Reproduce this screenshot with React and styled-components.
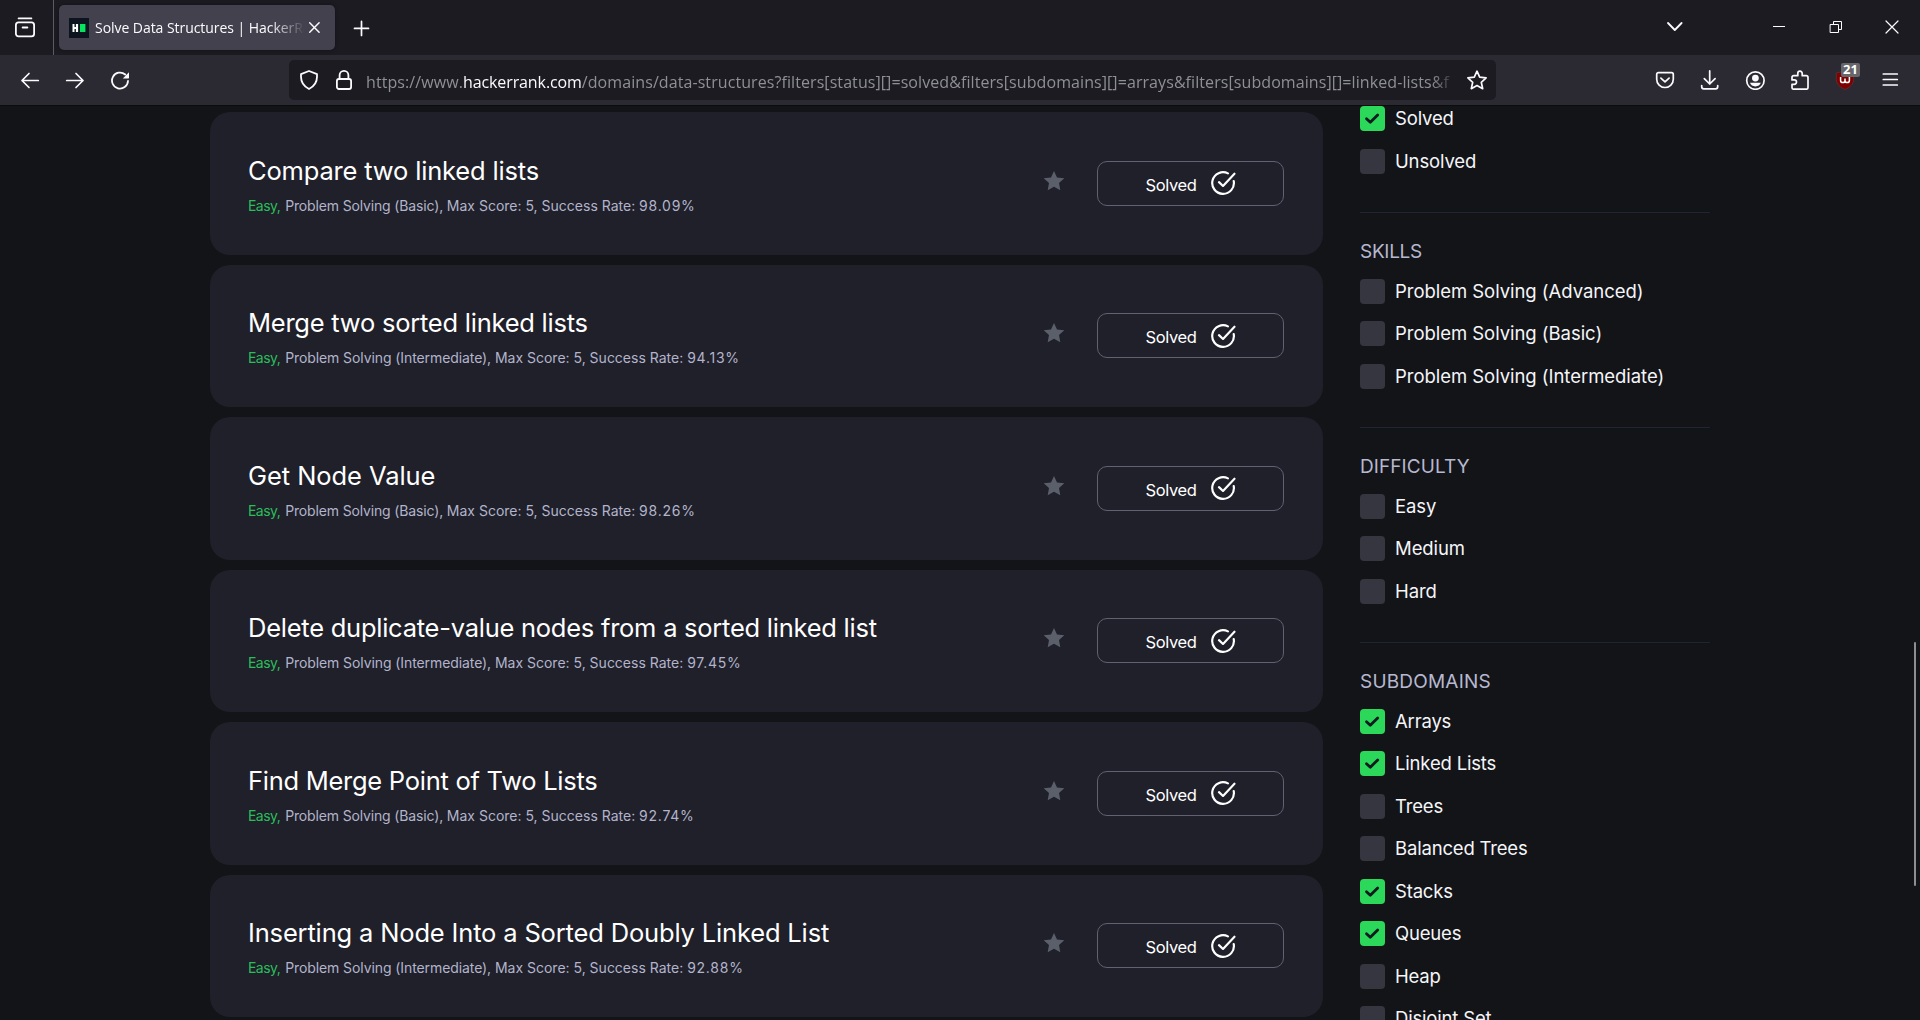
import React from 'react';
import styled, { createGlobalStyle } from 'styled-components';

const Global = createGlobalStyle`
  * { box-sizing: border-box; }
  html, body { margin: 0; padding: 0; background: #131418; }
  body { width: 1920px; height: 1020px; overflow: hidden; }
`;

const uiFont = `"Open Sans", "Noto Sans", sans-serif`;
const pageFont = `Inter, "Liberation Sans", sans-serif`;

const Window = styled.div`
  position: relative;
  width: 1920px;
  height: 1020px;
  overflow: hidden;
  display: flex;
  flex-direction: column;
  background: #131418;
  color: #fbfbfe;
`;

const TabBar = styled.header`
  height: 55px;
  flex: none;
  display: flex;
  align-items: center;
  background: #1c1b22;
`;

const ViewButton = styled.div`
  width: 54px;
  height: 55px;
  padding-left: 14px;
  display: flex;
  align-items: center;
  border-right: 1px solid #5b5b66;
`;

const Tab = styled.div`
  width: 276px;
  height: 45px;
  margin-left: 5px;
  padding-left: 10px;
  display: flex;
  align-items: center;
  border-radius: 5px;
  background: #42414d;
  box-shadow: 0 0 4px rgba(0, 0, 0, 0.4);
`;

const TabTitle = styled.span`
  width: 209px;
  margin-left: 6px;
  padding-top: 1px;
  overflow: hidden;
  white-space: nowrap;
  font: 14px/20px ${uiFont};
  letter-spacing: -0.05px;
  mask-image: linear-gradient(to right, #000 175px, transparent 210px);
`;

const NewTab = styled.div`
  margin-left: 16px;
  display: flex;
`;

const WindowControls = styled.div`
  margin-left: auto;
  padding: 0 18px 1px 0;
  display: flex;
  align-items: center;
`;

const Control = styled.div`
  width: 20px;
  height: 20px;
  margin-left: ${(p) => p.$gap}px;
  display: flex;
`;

const Toolbar = styled.nav`
  height: 51px;
  flex: none;
  display: flex;
  align-items: center;
  background: #2b2a33;
  border-bottom: 1px solid #0c0c0f;
`;

const NavButtons = styled.div`
  width: 289px;
  padding-left: 20px;
  display: flex;
  gap: 25px;
`;

const UrlBar = styled.div`
  width: 1207px;
  height: 40px;
  padding: 0 8px 0 10px;
  display: flex;
  align-items: center;
  border-radius: 5px;
  background: #1c1b22;
`;

const UrlText = styled.span`
  width: 1090px;
  margin-left: 12px;
  padding-top: 4px;
  overflow: hidden;
  white-space: nowrap;
  color: #8f8f96;
  font: 16px/24px ${uiFont};
  letter-spacing: 0.08px;
  mask-image: linear-gradient(to right, #000 1065px, transparent 1092px);
`;

const Host = styled.span`
  color: #fbfbfe;
  letter-spacing: -0.1px;
`;

const LockSlot = styled.span`
  margin-left: 15px;
  display: flex;
`;

const UrlStar = styled.span`
  margin-left: auto;
  display: flex;
`;

const Extensions = styled.div`
  margin-left: auto;
  padding-right: 20px;
  display: flex;
  gap: 25px;
`;

const ExtensionSlot = styled.div`
  position: relative;
  display: flex;
`;

const Badge = styled.span`
  position: absolute;
  left: 6px;
  top: -7px;
  width: 19px;
  height: 14px;
  border-radius: 2px;
  background: #66666b;
  color: #fff;
  font: 700 13px/13px ${uiFont};
  text-align: center;
`;

const Page = styled.main`
  flex: 1;
  min-height: 0;
  display: flex;
  gap: 37px;
  padding-left: 210px;
  overflow: hidden;
  font-family: ${pageFont};
`;

const ChallengeList = styled.section`
  width: 1113px;
  padding-top: 6px;
  display: flex;
  flex-direction: column;
  gap: 10px;
`;

const Card = styled.article`
  height: 142.5px;
  flex: none;
  padding: 0 39px 0 38px;
  display: flex;
  align-items: center;
  border-radius: 20px;
  background: #1f202a;
`;

const Info = styled.div`
  flex: 1;
  padding-top: 3px;
`;

const Title = styled.h4`
  margin: 0 0 8px;
  color: #fff;
  font-size: 25.5px;
  font-weight: 400;
  line-height: 34px;
  letter-spacing: ${(p) => p.$tracking}px;
  white-space: nowrap;
`;

const Meta = styled.div`
  color: #b3b4cb;
  font-size: 14px;
  line-height: 20px;
  white-space: nowrap;
`;

const Difficulty = styled.span`
  color: #2bbd5a;
  letter-spacing: -0.55px;
  margin-right: 1px;
`;

const Skill = styled.span`
  letter-spacing: ${(p) => (p.$long ? -0.09 : -0.15)}px;
`;

const Rate = styled.span`
  letter-spacing: 0.75px;
`;

const StarSlot = styled.div`
  margin-right: 32.5px;
  padding-bottom: 5px;
  display: flex;
`;

const SolvedButton = styled.button`
  width: 187px;
  height: 45px;
  padding: 0;
  display: flex;
  align-items: center;
  justify-content: center;
  gap: 13px;
  border: 1px solid #626171;
  border-radius: 10px;
  background: transparent;
  color: #fff;
  font: 16.5px/20px ${pageFont};
  letter-spacing: -0.35px;

  span { padding-top: 3px; }
`;

const Sidebar = styled.aside`
  width: 350px;
`;

const Group = styled.section`
  padding-bottom: 38px;
`;

const GroupTitle = styled.h5`
  margin: 0;
  padding: 27px 0 15px;
  border-top: 1px solid #1e2631;
  color: #b7b8d0;
  font-size: 19px;
  font-weight: 400;
  line-height: 24px;
  letter-spacing: ${(p) => p.$tracking}px;
`;

const Options = styled.div`
  display: flex;
  flex-direction: column;
  gap: 17.5px;
`;

const Option = styled.label`
  height: 25px;
  display: flex;
  align-items: center;
  gap: 10px;
  color: #f5f6f9;
  font-size: 18.5px;
  line-height: 25px;
  letter-spacing: ${(p) => p.$tracking}px;
  white-space: nowrap;
`;

const Box = styled.span`
  width: 25px;
  height: 25px;
  flex: none;
  display: flex;
  border-radius: 4px;
  background: ${(p) => (p.$on ? '#2bd85a' : '#363640')};
`;

const ScrollThumb = styled.div`
  position: absolute;
  right: 4px;
  top: 642px;
  width: 2px;
  height: 244px;
  border-radius: 1px;
  background: #8e8e91;
`;

const Svg = ({ size = 20, w = 1.6, children }) => (
  <svg width={size} height={size} viewBox={`0 0 ${size} ${size}`} fill="none" stroke="#fbfbfe"
    strokeWidth={w} strokeLinecap="round" strokeLinejoin="round">{children}</svg>
);

const ViewIcon = () => (
  <Svg size={22} w={1.8}>
    <path d="M4.6 1.4h12.8" />
    <rect x="1.9" y="5.4" width="18.2" height="14" rx="2.6" />
    <path d="M8.6 10.5h4.8" />
  </Svg>
);
const Favicon = () => (
  <svg width="20" height="20" viewBox="0 0 20 20">
    <rect width="20" height="20" fill="#0b141f" />
    <path d="M3.5 6v8h2v-2.9h1.4V14h2.2V6H6.9v2.9H5.5V6z" fill="#fff" />
    <rect x="11" y="6" width="5.4" height="8" fill="#05e35f" />
  </svg>
);
const CloseTab = () => <Svg size={22} w={1.5}><path d="M5.7 5.8l9.4 9.4M15.1 5.8l-9.4 9.4" /></Svg>;
const Plus = () => <Svg size={20} w={1.7}><path d="M10.5 3.4v14M3.5 10.4h14" /></Svg>;
const Back = () => <Svg w={1.7}><path d="M18.3 10.5H2M9 3.5l-7 7 7 7" /></Svg>;
const Forward = () => <Svg w={1.7}><path d="M1.700 10.500H18M11 3.500l7 7-7 7" /></Svg>;
const Reload = () => (
  <Svg w={1.8}>
    <path d="M18 11a8 8 0 1 1-2.800-6.500" />
    <path d="M19 2.200v5.600a.6.6 0 0 1-.6.6h-5.600z" fill="#fbfbfe" stroke="none" />
  </Svg>
);
const Shield = () => (
  <Svg w={1.8}><path d="M10 1l8 3.2v2.6c0 5-3.2 9.800-8 12.200-4.800-2.400-8-7.200-8-12.200V4.200z" /></Svg>
);
const Lock = () => (
  <Svg w={1.8}><rect x="2.900" y="9" width="14.200" height="10" rx="2" /><path d="M5.600 9V5.300a4.400 4.400 0 0 1 8.800 0V9" /></Svg>
);
const Bookmark = () => (
  <Svg size={22} w={1.7}>
    <path d="M11 2.200l2.700 6 6.400.7-4.800 4.400 1.400 6.400L11 16.500l-5.700 3.200 1.400-6.400L1.900 8.900l6.400-.7z" />
  </Svg>
);
const Pocket = () => (
  <Svg w={1.7}><path d="M3.400 2.700h13.200a1.700 1.700 0 0 1 1.700 1.700v4.800a8.300 8.300 0 0 1-16.600 0V4.400a1.700 1.700 0 0 1 1.700-1.700z" /><path d="M5.900 8.100l4.100 3.800 4.100-3.800" /></Svg>
);
const Download = () => (
  <Svg w={1.7}><path d="M9.700 .9v13M4.300 8.600L9.700 14l5.400-5.400M1.700 15.600v1.200a2 2 0 0 0 2 2h12a2 2 0 0 0 2-2v-1.200" /></Svg>
);
const Account = () => (
  <Svg w={1.7}>
    <circle cx="10.400" cy="10.600" r="8.700" />
    <circle cx="10.400" cy="8.100" r="3.400" fill="#fbfbfe" stroke="none" />
    <path d="M5 12.800h10.800c-.7 2.200-2.800 3.600-5.400 3.600s-4.700-1.400-5.400-3.600z" fill="#fbfbfe" stroke="none" />
  </Svg>
);
const Puzzle = () => (
  <Svg w={1.7}>
    <path d="M7.800 5.700V3.400a2.200 2.200 0 0 1 4.400 0v2.300h4.100a1.700 1.700 0 0 1 1.700 1.700v10.100a1.700 1.700 0 0 1-1.700 1.700H3.700A1.700 1.700 0 0 1 2 17.500v-3.200h2.300a2.200 2.200 0 0 0 0-4.400H2V7.400a1.700 1.700 0 0 1 1.700-1.700z" />
  </Svg>
);
const UBlock = () => (
  <svg width="20" height="20" viewBox="0 0 20 20">
    <path d="M10 1l8.700 2v6.500c0 4.500-4 8-8.700 10-4.700-2-8.700-5.500-8.700-10V3z" fill="#800000" stroke="#5c3a42" strokeWidth=".6" />
    <path d="M5.600 7v3.400a2.200 2.200 0 0 0 4.400 0V8.600m0 1.800a2.200 2.200 0 0 0 4.400 0V7" fill="none" stroke="#fff" strokeWidth="1.5" />
  </svg>
);
const Menu = () => <Svg w={1.7}><path d="M3.300 4h14M3.300 9.500h14M3.300 15h14" /></Svg>;
const ChevronDown = () => <Svg w={1.8}><path d="M2 6l6.800 7 6.800-7" /></Svg>;
const Minimize = () => <Svg w={1}><path d="M4 9.500h12" strokeLinecap="butt" /></Svg>;
const Restore = () => (
  <Svg w={1}><path d="M4.500 7.500h8v8h-8zM7.500 7.500v-3h8v8h-3" strokeLinejoin="miter" /></Svg>
);
const CloseWindow = () => <Svg w={1.2}><path d="M4 4l12 12M16 4L4 16" /></Svg>;

const FilledStar = () => (
  <svg width="22" height="22" viewBox="0 0 22 22" fill="#5b5f6a">
    <path d="M11 .9l3 6.500 7.300.8-5.300 4.900 1.300 7.200-6.300-3.600-6.300 3.600L6 13.100.7 8.200 8 7.400z" />
  </svg>
);
const CheckCircle = () => (
  <svg width="26" height="26" viewBox="0 0 24 24" fill="none" stroke="#fff" strokeWidth="2" strokeLinecap="round" strokeLinejoin="round">
    <path d="M21.900 10.200A10 10 0 1 1 16.600 3.100" />
    <path d="M8.300 11.200l3.700 3.500L22.600 3.400" />
  </svg>
);
const Tick = () => (
  <svg width="25" height="25" viewBox="0 0 25 25" fill="none" stroke="#0d1a20" strokeWidth="2.8" strokeLinecap="round" strokeLinejoin="round">
    <path d="M6.500 12.700l3.800 3.600 7.400-7.400" />
  </svg>
);

const challenges = [
  { title: 'Compare two linked lists', skill: 'Basic', rate: '98.09%', tracking: -0.17 },
  { title: 'Merge two sorted linked lists', skill: 'Intermediate', rate: '94.13%', tracking: -0.24 },
  { title: 'Get Node Value', skill: 'Basic', rate: '98.26%', tracking: -0.07 },
  { title: 'Delete duplicate-value nodes from a sorted linked list', skill: 'Intermediate', rate: '97.45%', tracking: -0.25 },
  { title: 'Find Merge Point of Two Lists', skill: 'Basic', rate: '92.74%', tracking: -0.27 },
  { title: 'Inserting a Node Into a Sorted Doubly Linked List', skill: 'Intermediate', rate: '92.88%', tracking: -0.16 },
];

const filters = [
  { tracking: -0.15, options: [['Solved', true], ['Unsolved']] },
  {
    title: 'SKILLS', titleTracking: -0.3, tracking: -0.04,
    options: [['Problem Solving (Advanced)'], ['Problem Solving (Basic)'], ['Problem Solving (Intermediate)']],
  },
  { title: 'DIFFICULTY', titleTracking: 0.08, tracking: -0.08, options: [['Easy'], ['Medium'], ['Hard']] },
  {
    title: 'SUBDOMAINS', titleTracking: 0.2, tracking: -0.18,
    options: [['Arrays', true], ['Linked Lists', true], ['Trees'], ['Balanced Trees'], ['Stacks', true], ['Queues', true], ['Heap'], ['Disjoint Set']],
  },
];

function Browser() {
  return (
    <>
      <TabBar>
        <ViewButton><ViewIcon /></ViewButton>
        <Tab>
          <Favicon />
          <TabTitle>Solve Data Structures | HackerRank</TabTitle>
          <CloseTab />
        </Tab>
        <NewTab><Plus /></NewTab>
        <WindowControls>
          <Control $gap={0}><ChevronDown /></Control>
          <Control $gap={83}><Minimize /></Control>
          <Control $gap={37}><Restore /></Control>
          <Control $gap={36}><CloseWindow /></Control>
        </WindowControls>
      </TabBar>
      <Toolbar>
        <NavButtons><Back /><Forward /><Reload /></NavButtons>
        <UrlBar>
          <Shield />
          <LockSlot><Lock /></LockSlot>
          <UrlText>
            https://www.<Host>hackerrank.com</Host>/domains/data-structures?filters[status][]=solved&amp;filters[subdomains][]=arrays&amp;filters[subdomains][]=linked-lists&amp;f
          </UrlText>
          <UrlStar><Bookmark /></UrlStar>
        </UrlBar>
        <Extensions>
          <Pocket /><Download /><Account /><Puzzle />
          <ExtensionSlot><UBlock /><Badge>21</Badge></ExtensionSlot>
          <Menu />
        </Extensions>
      </Toolbar>
    </>
  );
}

export default function App() {
  return (
    <Window>
      <Global />
      <Browser />
      <Page>
        <ChallengeList>
          {challenges.map((c) => (
            <Card key={c.title}>
              <Info>
                <Title $tracking={c.tracking}>{c.title}</Title>
                <Meta>
                  <Difficulty>Easy,</Difficulty>{' '}
                  <Skill $long={c.skill === 'Intermediate'}>Problem Solving ({c.skill}), </Skill>
                  Max Score: 5, Success Rate: <Rate>{c.rate}</Rate>
                </Meta>
              </Info>
              <StarSlot><FilledStar /></StarSlot>
              <SolvedButton><span>Solved</span><CheckCircle /></SolvedButton>
            </Card>
          ))}
        </ChallengeList>
        <Sidebar>
          {filters.map((g, i) => (
            <Group key={i}>
              {g.title && <GroupTitle $tracking={g.titleTracking}>{g.title}</GroupTitle>}
              <Options>
                {g.options.map(([name, on]) => (
                  <Option key={name} $tracking={g.tracking}><Box $on={on}>{on && <Tick />}</Box>{name}</Option>
                ))}
              </Options>
            </Group>
          ))}
        </Sidebar>
      </Page>
      <ScrollThumb />
    </Window>
  );
}
